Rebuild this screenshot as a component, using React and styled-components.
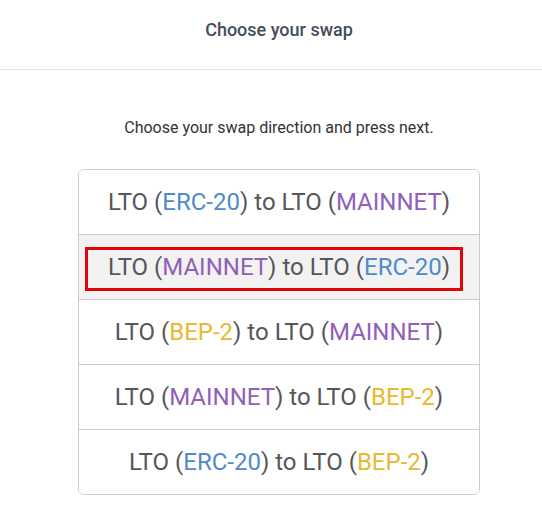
import React from 'react'
import styled, { createGlobalStyle } from 'styled-components'

const GlobalStyle = createGlobalStyle`
  html, body {
    margin: 0;
    padding: 0;
    background: #fff;
    font-family: Roboto, "Liberation Sans", sans-serif;
  }
`

const Page = styled.div`
  width: 542px;
  height: 518px;
  display: flex;
  flex-direction: column;
  overflow: hidden;
`

const Header = styled.header`
  height: 69px;
  border-bottom: 1px solid #e2e2e2;
  display: flex;
  align-items: center;
  justify-content: center;
  h1 {
    margin: 0;
    font-size: 18px;
    font-weight: 500;
    color: #444d5c;
    padding-bottom: 11px;
    padding-left: 16px;
  }
`

const Body = styled.main`
  display: flex;
  flex-direction: column;
  align-items: center;
  padding-top: 48px;
`

const Hint = styled.p`
  margin: 0 0 31px;
  font-size: 16px;
  line-height: 20px;
  color: #333;
  padding-left: 16px;
`

const List = styled.ul`
  list-style: none;
  margin: 0;
  padding: 0;
  width: 400px;
  margin-left: 16px;
  border: 1px solid #c9cdd2;
  border-radius: 6px;
  overflow: hidden;
`

const Row = styled.li`
  position: relative;
  height: 64px;
  display: flex;
  align-items: center;
  justify-content: center;
  font-size: 24px;
  color: #555759;
  background: ${p => (p.$active ? '#f2f2f2' : '#fff')};
  border-top: ${p => (p.$first ? 'none' : '1px solid #c9cdd2')};
  cursor: pointer;
`

const Highlight = styled.span`
  position: absolute;
  left: 6px;
  top: 12px;
  width: 372px;
  height: 38px;
  border: 3px solid #e0050b;
  pointer-events: none;
`

const Net = styled.span`
  color: ${p => p.$color};
`

const colors = {
  'ERC-20': '#4f8bcb',
  MAINNET: '#9160b8',
  'BEP-2': '#e8b930',
}

const swaps = [
  ['ERC-20', 'MAINNET'],
  ['MAINNET', 'ERC-20'],
  ['BEP-2', 'MAINNET'],
  ['MAINNET', 'BEP-2'],
  ['ERC-20', 'BEP-2'],
]

const App = () => {
  return (
    <>
      <GlobalStyle />
      <Page>
        <Header>
          <h1>Choose your swap</h1>
        </Header>
        <Body>
          <Hint>Choose your swap direction and press next.</Hint>
          <List>
            {swaps.map(([from, to], i) => (
              <Row key={i} $first={i === 0} $active={i === 1}>
                {i === 1 && <Highlight />}
                LTO (<Net $color={colors[from]}>{from}</Net>) to LTO (
                <Net $color={colors[to]}>{to}</Net>)
              </Row>
            ))}
          </List>
        </Body>
      </Page>
    </>
  )
}

export default App
